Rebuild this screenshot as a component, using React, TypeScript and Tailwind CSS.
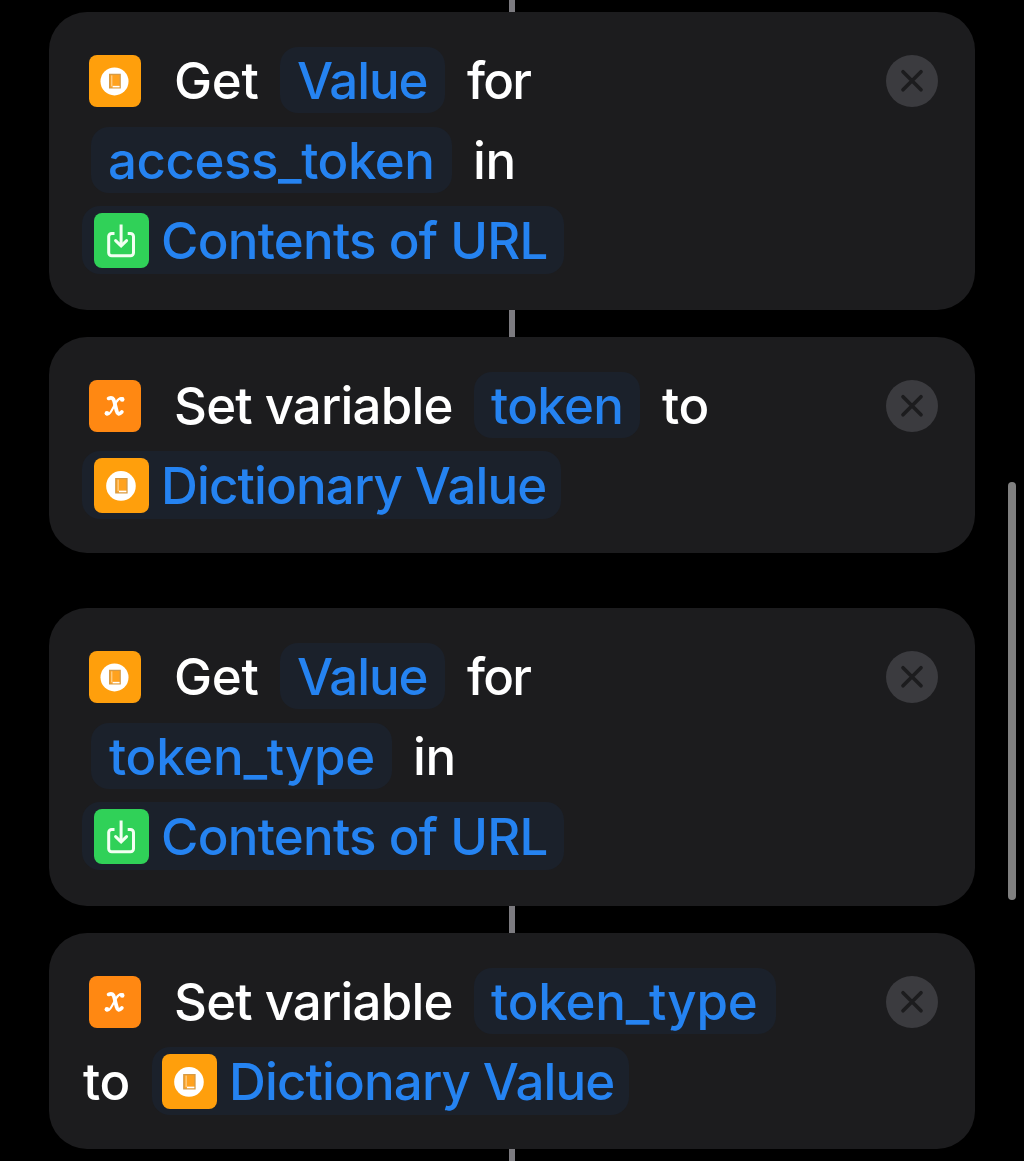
import type { ReactNode } from "react";

function BookGlyph({ className }: { className: string }) {
  return (
    <svg viewBox="0 0 52 52" className={className}>
      <circle cx="25.5" cy="26.4" r="14" fill="#fff" />
      <path d="M20.600 19.400h10.600v13.600H20.600z" fill="#ffa21f" stroke="#d59a45" strokeWidth="1.2" />
      <path d="M23.600 31.600h7" stroke="#fff" strokeWidth="1.5" />
      <path d="M22.800 20.400v11" stroke="#ffe0b0" strokeWidth="0.9" />
    </svg>
  );
}

function DictionaryIcon() {
  return (
    <div className="mt-0.5 h-[52px] w-[52px] shrink-0 rounded-[8px] bg-[#ff9f0c]">
      <BookGlyph className="h-[52px] w-[52px]" />
    </div>
  );
}

function VariableIcon() {
  return (
    <div className="mt-0.5 h-[52px] w-[52px] shrink-0 rounded-[8px] bg-[#ff8812]">
      <svg viewBox="0 0 52 52" className="h-[52px] w-[52px]" fill="none" stroke="#fff" strokeLinecap="round">
        <path d="M19.600 18.400c3.600-1.400 5 .2 5.700 3.200l2.300 9.200c.8 3.200 2.400 4.200 5.200 1.200" strokeWidth="3.8" />
        <path d="M33.600 18.400c-2.600-1-4.600.8-6.400 3.800l-4.400 8c-2 3.600-3.600 5-5.600 3.800" strokeWidth="2.1" />
        <circle cx="33.2" cy="19.4" r="2.3" fill="#fff" stroke="none" />
        <circle cx="17.9" cy="33.2" r="2.3" fill="#fff" stroke="none" />
      </svg>
    </div>
  );
}

function DownloadBadge() {
  return (
    <div className="h-[55px] w-[55px] shrink-0 rounded-[8px] bg-[#30d158]">
      <svg viewBox="0 0 55 55" className="h-[55px] w-[55px]" fill="none" stroke="#f2fff2" strokeWidth="3">
        <path d="M20.500 20.400h-2.800a3 3 0 0 0-3 3v16.400a3 3 0 0 0 3 3h18.800a3 3 0 0 0 3-3V23.400a3 3 0 0 0-3-3h-2.800" />
        <path d="M27.100 11.500v21" />
        <path d="M21.600 27.600l5.500 5.300 5.500-5.300" strokeLinecap="round" />
      </svg>
    </div>
  );
}

function DictionaryBadge() {
  return (
    <div className="h-[55px] w-[55px] shrink-0 rounded-[8px] bg-[#ff9f0c]">
      <BookGlyph className="h-[55px] w-[55px]" />
    </div>
  );
}

function CloseButton() {
  return (
    <button className="mt-0.5 mr-[37px] ml-auto h-[52px] w-[52px] shrink-0 rounded-full bg-[#3b3b3f]" aria-label="Remove action">
      <svg viewBox="0 0 52 52" className="h-[52px] w-[52px]" fill="none" stroke="#1c1c1e" strokeWidth="3.7" strokeLinecap="round">
        <path d="M17 16.800l18 18M35 16.800l-18 18" />
      </svg>
    </button>
  );
}

function Label({ className, children }: { className: string; children: ReactNode }) {
  return <span className={"pt-0.5 " + className}>{children}</span>;
}

function Pill({ className, children }: { className: string; children: ReactNode }) {
  return (
    <div className={"flex shrink-0 items-center rounded-[18px] bg-[#1b212b] text-[#2583f1] " + className}>{children}</div>
  );
}

function Row({ children }: { children: ReactNode }) {
  return <div className="flex h-20 items-center whitespace-nowrap">{children}</div>;
}

function Card({ className, children }: { className: string; children: ReactNode }) {
  return (
    <section className={"ml-[49px] w-[926px] shrink-0 rounded-[38px] bg-[#1c1c1e] pt-7 pl-[33px] " + className}>
      {children}
    </section>
  );
}

function Connector({ className }: { className: string }) {
  return <div className={"ml-[509px] w-1.5 shrink-0 bg-[#7c7b80] " + className} />;
}

function GetValueCard({ field }: { field: ReactNode }) {
  return (
    <Card className="h-[298px]">
      <Row>
        <div className="ml-[7px]">
          <DictionaryIcon />
        </div>
        <Label className="ml-[33px] w-[106px] tracking-[-0.3px]">Get</Label>
        <Pill className="h-[66px] w-[165px] pl-[17px]">
          <Label className="tracking-[-1.1px]">Value</Label>
        </Pill>
        <Label className="ml-[22px] tracking-[-1.8px]">for</Label>
        <CloseButton />
      </Row>
      <Row>
        {field}
        <Label className="ml-[21px] tracking-[-0.4px]">in</Label>
      </Row>
      <Row>
        <Pill className="h-[68px] w-[482px] pl-3">
          <DownloadBadge />
          <Label className="ml-3 tracking-[-0.74px]">Contents of URL</Label>
        </Pill>
      </Row>
    </Card>
  );
}

export default function App() {
  return (
    <main className="flex h-[1161px] w-[1024px] overflow-hidden bg-black font-['Inter',sans-serif] text-[51px] leading-[60px] font-medium text-white">
      <div className="flex w-[1008px] shrink-0 flex-col">
        <Connector className="h-3" />
        <GetValueCard
          field={
            <Pill className="ml-[9px] h-[66px] w-[361px] pl-[17px]">
              <Label className="tracking-[-0.45px]">access_token</Label>
            </Pill>
          }
        />
        <Connector className="h-[27px]" />
        <Card className="h-[216px]">
          <Row>
            <div className="ml-[7px]">
              <VariableIcon />
            </div>
            <Label className="ml-[33px] w-[300px] tracking-[-0.8px]">Set variable</Label>
            <Pill className="h-[66px] w-[166px] pl-[17px]">
              <Label className="tracking-[-0.7px]">token</Label>
            </Pill>
            <Label className="ml-[22px] tracking-[-0.4px]">to</Label>
            <CloseButton />
          </Row>
          <Row>
            <Pill className="h-[68px] w-[479px] pl-3">
              <DictionaryBadge />
              <Label className="ml-3 tracking-[-0.85px]">Dictionary Value</Label>
            </Pill>
          </Row>
        </Card>
        <div className="h-[55px] shrink-0" />
        <GetValueCard
          field={
            <Pill className="ml-[9px] h-[66px] w-[301px] pl-[18px]">
              <Label className="tracking-[-0.25px]">token_type</Label>
            </Pill>
          }
        />
        <Connector className="h-[27px]" />
        <Card className="h-[216px]">
          <Row>
            <div className="ml-[7px]">
              <VariableIcon />
            </div>
            <Label className="ml-[33px] w-[300px] tracking-[-0.8px]">Set variable</Label>
            <Pill className="h-[66px] w-[302px] pl-[17px]">
              <Label className="tracking-[-0.2px]">token_type</Label>
            </Pill>
            <CloseButton />
          </Row>
          <Row>
            <Label className="ml-px w-[69px] tracking-[-0.4px]">to</Label>
            <Pill className="h-[68px] w-[477px] pl-2.5">
              <DictionaryBadge />
              <Label className="ml-3 tracking-[-0.85px]">Dictionary Value</Label>
            </Pill>
          </Row>
        </Card>
        <Connector className="h-3" />
      </div>
      <div className="mt-[482px] h-[418px] w-2 shrink-0 rounded-full bg-[#808080]" />
    </main>
  );
}
